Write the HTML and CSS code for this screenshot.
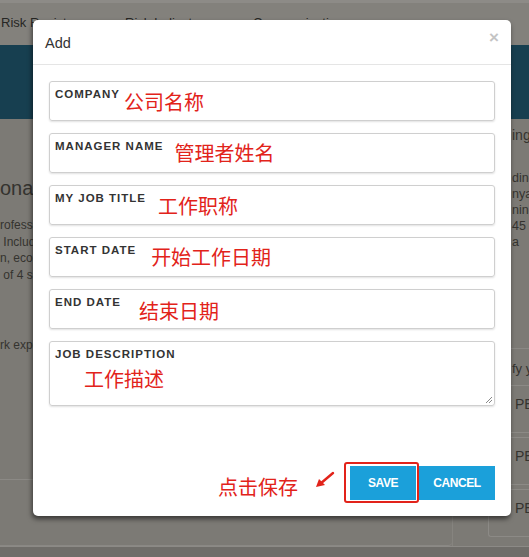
FILE: index.html
```html
<!DOCTYPE html>
<html lang="zh">
<head>
<meta charset="utf-8">
<title>Add</title>
<link rel="stylesheet" href="styles.css">
</head>
<body>
<div class="page">
  <header class="topbar">
    <span class="nav-item nav-1">Risk Register</span>
    <span class="nav-item nav-2">Risk Indicators</span>
    <span class="nav-item nav-3">Communications</span>
  </header>
  <div class="band"></div>
  <main class="content">
    <section class="left">
      <h2 class="left-title">onal S</h2>
      <p class="left-text">rofessio<br>&nbsp;Includin<br>n, econo<br>&nbsp;of 4 sub</p>
      <p class="left-text exp">rk experi</p>
      <div class="left-divider"></div>
    </section>
    <aside class="right">
      <div class="right-head">ing</div>
      <div class="right-text">ding<br>nya<br>ning<br>45<br>a</div>
      <div class="right-sep"></div>
      <div class="right-hint">fy your</div>
      <div class="type-box">PE</div>
      <div class="type-box">PE</div>
      <div class="type-box">PE</div>
    </aside>
  </main>
  <footer class="foot"></footer>
</div>

<div class="modal">
  <div class="modal-header">
    <span class="modal-title">Add</span>
    <span class="modal-close">&times;</span>
  </div>
  <div class="modal-body">
    <div class="field">
      <span class="label">COMPANY</span>
      <span class="note note-company">公司名称</span>
    </div>
    <div class="field">
      <span class="label">MANAGER NAME</span>
      <span class="note note-manager">管理者姓名</span>
    </div>
    <div class="field">
      <span class="label">MY JOB TITLE</span>
      <span class="note note-title">工作职称</span>
    </div>
    <div class="field">
      <span class="label">START DATE</span>
      <span class="note note-start">开始工作日期</span>
    </div>
    <div class="field">
      <span class="label">END DATE</span>
      <span class="note note-end">结束日期</span>
    </div>
    <div class="field field-area">
      <span class="label">JOB DESCRIPTION</span>
      <span class="note note-desc">工作描述</span>
      <svg class="grip" width="8" height="8" viewBox="0 0 8 8"><path d="M7 1 L1 7 M7 4 L4 7" stroke="#888" stroke-width="1" fill="none"/></svg>
    </div>
  </div>
  <div class="modal-footer">
    <span class="note note-save">点击保存</span>
    <svg class="arrow" width="20" height="18" viewBox="0 0 20 18"><path d="M18 2 L5 13" stroke="#e2231a" stroke-width="2.4" fill="none" stroke-linecap="round"/><path d="M1 16 L4 8 L10 14 Z" fill="#e2231a"/></svg>
    <div class="save-wrap"><button class="btn">SAVE</button></div>
    <button class="btn btn-cancel">CANCEL</button>
  </div>
</div>
</body>
</html>
```

FILE: styles.css
```css
html, body {
  margin: 0;
  padding: 0;
}
body {
  width: 529px;
  height: 557px;
  overflow: hidden;
  position: relative;
  background: #7c7a75;
  font-family: "Liberation Sans", Arial, sans-serif;
}
.page {
  display: flex;
  flex-direction: column;
  height: 557px;
}
.topbar {
  height: 45px;
  flex: none;
  background: #83817c;
  border-top: 3px solid #8d8b87;
  box-sizing: border-box;
  display: flex;
  align-items: flex-start;
  padding-top: 12px;
  font-size: 13px;
  color: #262624;
}
.nav-item { white-space: nowrap; }
.nav-1 { margin-left: 1px; width: 124px; }
.nav-2 { width: 128px; }
.band {
  height: 74px;
  flex: none;
  background: #173f50;
}
.content {
  height: 427px;
  flex: none;
  display: flex;
  color: #34332f;
}
.left {
  width: 452px;
  flex: none;
  display: flex;
  flex-direction: column;
  border-bottom: 1px solid #8a8884;
  border-radius: 0 0 4px 0;
  box-sizing: border-box;
}
.left-title {
  margin: 57px 0 0 0;
  font-size: 20px;
  font-weight: normal;
  line-height: 24px;
  white-space: nowrap;
  color: #34332f;
}
.left-text {
  margin: 17px 0 0 0;
  font-size: 12px;
  line-height: 16.5px;
  white-space: nowrap;
}
.left-text.exp { margin-top: 54px; }
.left-divider {
  margin-top: 125px;
  height: 1px;
  background: #8b8985;
}
.right {
  flex: 1;
  min-width: 0;
  overflow: hidden;
  padding-left: 59px;
  display: flex;
  flex-direction: column;
  font-size: 13px;
  white-space: nowrap;
  border-left: 1px solid #86847f;
}
.right-head {
  margin-top: 8px;
  font-size: 14px;
  line-height: 17px;
}
.right-text {
  margin-top: 26px;
  line-height: 16px;
  font-size: 12.5px;
}
.right-sep {
  margin: 98px 0 0 -59px;
  height: 1px;
  background: #8a8884;
}
.right-hint {
  margin-top: 12px;
  font-size: 13px;
  line-height: 16px;
}
.type-box {
  margin-top: 8px;
  margin-left: -24px;
  height: 48px;
  border: 1px solid #8c8a86;
  border-right: none;
  border-radius: 3px 0 0 3px;
  padding: 10px 0 0 26px;
  box-sizing: border-box;
  font-size: 14px;
}
.type-box + .type-box { margin-top: 4px; }
.foot {
  flex: 1;
  background: #6f6d69;
  border-top: 1px solid #8c8a86;
}

/* modal */
.modal {
  position: absolute;
  left: 33px;
  top: 20px;
  width: 478px;
  height: 496px;
  background: #fff;
  border-radius: 5px;
  box-shadow: -1px 3px 5px rgba(0,0,0,0.55);
  display: flex;
  flex-direction: column;
}
.modal-header {
  height: 45px;
  border-bottom: 1px solid #e5e5e5;
  display: flex;
  justify-content: space-between;
  align-items: flex-start;
  padding: 0 12px 0 12px;
  box-sizing: border-box;
}
.modal-title {
  margin-top: 15px;
  font-size: 14.5px;
  color: #333;
}
.modal-close {
  margin-top: 8px;
  font-size: 17px;
  font-weight: bold;
  color: #c4c4c4;
}
.modal-body {
  padding: 16px 16px 0 16px;
  display: flex;
  flex-direction: column;
  gap: 12px;
}
.field {
  height: 40px;
  border: 1px solid #cfcfcf;
  border-radius: 3px;
  box-shadow: 0 1px 2px rgba(0,0,0,0.12);
  box-sizing: border-box;
  display: flex;
  align-items: flex-start;
  position: relative;
  padding-left: 5px;
}
.field-area { height: 65px; flex-direction: column; }
.label {
  margin-top: 5px;
  font-size: 11.5px;
  font-weight: bold;
  letter-spacing: 1px;
  color: #333;
  line-height: 14px;
  white-space: nowrap;
}
.note {
  font-family: "Noto Sans CJK SC", sans-serif;
  font-size: 20px;
  line-height: 24px;
  color: #e2231a;
  white-space: nowrap;
}
.note-company { margin: 8px 0 0 4px; }
.note-manager { margin: 7px 0 0 11px; }
.note-title { margin: 8px 0 0 12px; }
.note-start { margin: 7px 0 0 15px; }
.note-end { margin: 9px 0 0 18px; }
.note-desc { margin: 6px 0 0 29px; }
.grip {
  position: absolute;
  right: 1px;
  bottom: 1px;
}
.modal-footer {
  margin-top: auto;
  display: flex;
  align-items: flex-end;
  padding: 0 16px 13px 0;
  justify-content: flex-end;
}
.note-save {
  margin-bottom: 4px;
  margin-right: 17px;
}
.arrow {
  margin-bottom: 14px;
  margin-right: 9px;
}
.save-wrap {
  border: 2px solid #e2231a;
  border-radius: 3px;
  padding: 2px 1px 1px 4px;
  display: flex;
}
.btn {
  width: 66px;
  height: 34px;
  border: none;
  border-radius: 0;
  background: #1ba0da;
  color: #fff;
  font-family: "Liberation Sans", Arial, sans-serif;
  font-size: 12px;
  font-weight: bold;
  letter-spacing: -0.4px;
  padding: 0;
}
.btn-cancel {
  width: 76px;
  margin-bottom: 3px;
}
```
